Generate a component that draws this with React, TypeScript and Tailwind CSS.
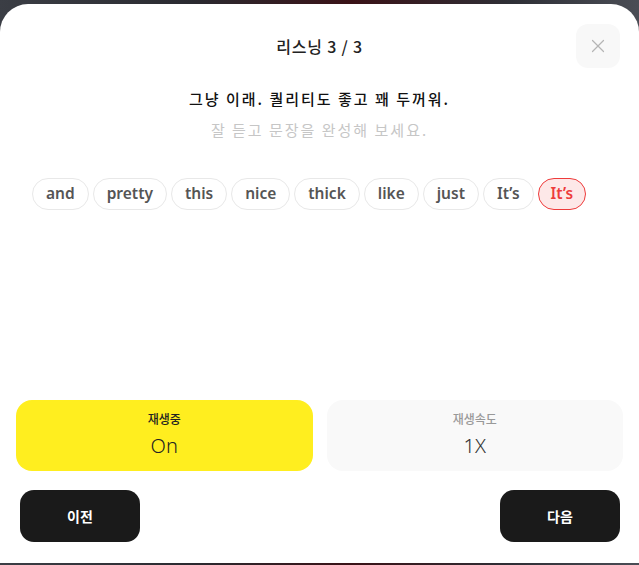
import { X } from "lucide-react";

const words = ["and", "pretty", "this", "nice", "thick", "like", "just", "It’s"];

export default function App() {
  return (
    <div
      className="h-[565px] w-full pt-[4px] pb-[2px] bg-[linear-gradient(90deg,#3b3e45_0%,#2a2a30_30%,#3a1217_55%,#2e2f36_80%,#4a4d55_100%)]"
      style={{ fontFamily: '"Noto Sans", "Noto Sans CJK KR", sans-serif' }}
    >
      <div className="h-full bg-white rounded-t-[28px] flex flex-col">
        <div className="relative pt-[20px] flex justify-center items-center h-[64px]">
          <h1
            className="text-[16px] font-medium text-[#222] tracking-[0.8px]"
            style={{ fontFamily: '"Noto Sans CJK KR", sans-serif' }}
          >
            리스닝 3 / 3
          </h1>
          <button className="absolute right-[19px] top-[20px] w-[44px] h-[44px] rounded-[12px] bg-[#f8f8f8] flex items-center justify-center">
            <X size={22} strokeWidth={1.3} className="text-[#b5b5b5]" />
          </button>
        </div>

        <div
          className="flex flex-col items-center mt-[20px]"
          style={{ fontFamily: '"Noto Sans CJK KR", sans-serif' }}
        >
          <p className="text-[15px] leading-[22px] font-medium text-[#111] tracking-[2px]">
            그냥 이래. 퀄리티도 좋고 꽤 두꺼워.
          </p>
          <p className="mt-[9px] text-[15px] leading-[22px] text-[#c6c6c6] tracking-[2px]">
            잘 듣고 문장을 완성해 보세요.
          </p>
        </div>

        <div className="mt-[37px] px-[32px] flex flex-wrap gap-[4px]">
          {words.map((w, i) => (
            <span
              key={i}
              className="h-[32px] px-[13px] flex items-center rounded-full border border-[#e8e8e8] text-[15.5px] font-semibold text-[#555]"
            >
              {w}
            </span>
          ))}
          <span className="h-[32px] px-[12px] flex items-center rounded-full border border-[#ee3b3b] bg-[#fde8e8] text-[15.5px] font-semibold text-[#ee3b3b]">
            It’s
          </span>
        </div>

        <div className="mt-auto px-[16px] flex gap-[14px]">
          <div className="flex-1 h-[71px] rounded-[16px] bg-[#ffee1f] flex flex-col items-center justify-center">
            <span
              className="text-[12px] leading-[16px] font-medium text-[#222]"
              style={{ fontFamily: '"Noto Sans CJK KR", sans-serif' }}
            >
              재생중
            </span>
            <span className="mt-[5px] text-[20px] leading-[28px] font-light text-[#222]">On</span>
          </div>
          <div className="flex-1 h-[71px] rounded-[16px] bg-[#f9f9f9] flex flex-col items-center justify-center">
            <span
              className="text-[12px] leading-[16px] font-medium text-[#999]"
              style={{ fontFamily: '"Noto Sans CJK KR", sans-serif' }}
            >
              재생속도
            </span>
            <span className="mt-[5px] text-[20px] leading-[28px] font-light text-[#333]">1X</span>
          </div>
        </div>

        <div
          className="mt-[19px] pl-[20px] pr-[19px] pb-[21px] flex justify-between"
          style={{ fontFamily: '"Noto Sans CJK KR", sans-serif' }}
        >
          <button className="w-[120px] h-[52px] rounded-[14px] bg-[#1a1a1a] text-white text-[14px] font-bold">
            이전
          </button>
          <button className="w-[120px] h-[52px] rounded-[14px] bg-[#1a1a1a] text-white text-[14px] font-bold">
            다음
          </button>
        </div>
      </div>
    </div>
  );
}
